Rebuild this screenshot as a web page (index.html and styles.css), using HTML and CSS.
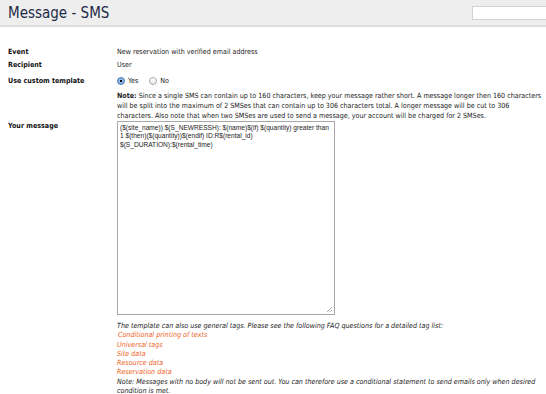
FILE: index.html
```html
<!DOCTYPE html>
<html lang="en">
<head>
    <meta charset="UTF-8">
    <title>Message - SMS</title>
    <link rel="stylesheet" href="styles.css">
</head>
<body>
    <header class="topbar">
        <h1>Message - SMS</h1>
        <input type="text" class="search">
    </header>
    <div class="form">
        <div class="row">
            <div class="label">Event</div>
            <div class="value">New reservation with verified email address</div>
        </div>
        <div class="row">
            <div class="label">Recipient</div>
            <div class="value">User</div>
        </div>
        <div class="row row-radio">
            <div class="label">Use custom template</div>
            <div class="value radios">
                <label class="radio"><span class="dot checked"></span>Yes</label>
                <label class="radio"><span class="dot"></span>No</label>
            </div>
        </div>
        <div class="row row-note">
            <div class="label"></div>
            <div class="value note"><b>Note:</b> Since a single SMS can contain up to 160 characters, keep your message rather short. A message longer then 160 characters will be split into the maximum of 2 SMSes that can contain up to 306 characters total. A longer message will be cut to 306 characters. Also note that when two SMSes are used to send a message, your account will be charged for 2 SMSes.</div>
        </div>
        <div class="row row-message">
            <div class="label">Your message</div>
            <div class="value">
                <div class="textarea">($(site_name)) $(S_NEWRESSH): $(name)$(if) $(quantity) greater than 1 $(then)($(quantity))$(endif) ID:R$(rental_id)<br>$(S_DURATION):$(rental_time)
                    <svg class="grip" width="7" height="7" viewBox="0 0 7 7">
                        <path d="M6 1L1 6M6 4L4 6" stroke="#999" stroke-width="0.8" fill="none"/>
                    </svg>
                </div>
                <div class="help">
                    <p>The template can also use general tags. Please see the following FAQ questions for a detailed tag list:</p>
                    <a href="#" class="first">Conditional printing of texts</a>
                    <a href="#">Universal tags</a>
                    <a href="#">Site data</a>
                    <a href="#">Resource data</a>
                    <a href="#">Reservation data</a>
                    <p>Note: Messages with no body will not be sent out. You can therefore use a conditional statement to send emails only when desired condition is met.</p>
                </div>
            </div>
        </div>
    </div>
</body>
</html>
```

FILE: styles.css
```css
body {
    font-family: 'DejaVu Sans Condensed', 'DejaVu Sans', sans-serif;
    font-size: 7.1px;
    margin: 0;
    padding: 0;
    background-color: white;
    color: #222;
}
.topbar {
    background: #eeeeee;
    height: 25px;
    border-bottom: 2px solid #dddddd;
    display: flex;
    align-items: center;
    justify-content: space-between;
}
.topbar h1 {
    margin: 0 0 0 8px;
    font-size: 15px;
    font-weight: normal;
    color: #1c2a48;
}
.search {
    width: 80px;
    height: 12px;
    margin-right: -8px;
    border: 1px solid #d2d2d2;
    padding: 0;
    background: white;
}
.form {
    padding: 20px 0 0 8px;
}
.row {
    display: flex;
    line-height: 10px;
}
.label {
    width: 109px;
    flex-shrink: 0;
    font-weight: bold;
    color: #111;
}
.value {
    flex: 1;
    padding-right: 4px;
}
.row + .row {
    margin-top: 3px;
}
.row-radio {
    margin-top: 6px !important;
}
.row-note {
    margin-top: 5px !important;
}
.radios {
    display: flex;
    gap: 11px;
}
.radio {
    display: flex;
    align-items: center;
}
.dot {
    width: 8px;
    height: 8px;
    border-radius: 50%;
    border: 1px solid #a8a8a8;
    box-sizing: border-box;
    margin-right: 3px;
    background: linear-gradient(#fff, #e8e8e8);
}
.dot.checked {
    border-color: #4a78b8;
    background: radial-gradient(circle, #111 0 1.3px, #9cc3ee 1.6px, #5e95d8 100%);
}
.note {
    color: #222;
}
.row-message {
    margin-top: 0 !important;
}
.textarea {
    width: 218px;
    height: 194px;
    box-sizing: border-box;
    border: 1px solid #a9a9a9;
    padding: 2px 2px;
    font-family: 'Liberation Sans', sans-serif;
    font-size: 6.6px;
    line-height: 8.4px;
    color: #222;
    position: relative;
}
.grip {
    position: absolute;
    right: 1px;
    bottom: 1px;
}
.help {
    margin-top: 6px;
    font-style: italic;
    line-height: 9.3px;
}
.help p {
    margin: 0;
}
.help a {
    display: block;
    color: #ee611c;
    text-decoration: none;
}
.help a.first {
    padding-left: 1px;
}
```
